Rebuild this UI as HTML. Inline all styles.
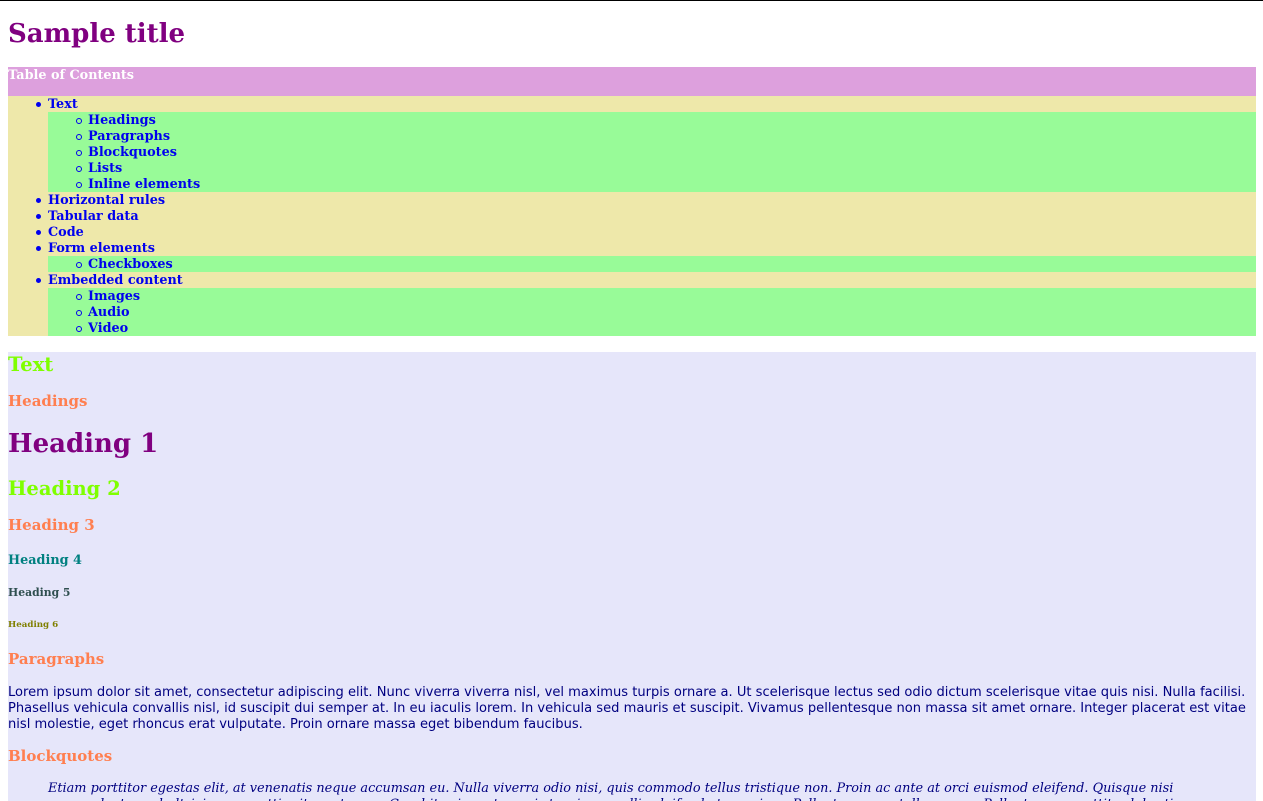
<!DOCTYPE html>
<html><head><meta charset="utf-8"><style>
html,body{margin:0;padding:0;background:#fff;width:1263px;height:800px;overflow:hidden}
body{border-top:1px solid #000;position:relative;font-family:"DejaVu Serif","Liberation Serif",serif}
.a{position:absolute;left:8px;white-space:nowrap;font-weight:bold}
#toch{position:absolute;left:8px;top:66px;width:1248px;height:29px;background:#dda0dd;color:#fff;font-weight:bold;font-size:12.8px;line-height:18px}
#toc{position:absolute;left:8px;top:95px;width:1248px;height:240px;background:#eee8aa}
.r{position:absolute;height:16px;line-height:18px;font-size:12.8px;font-weight:bold;color:#0000ee}
.g{background:#98fb98;left:40px;width:1208px}
.k{left:40px}
.d{position:absolute;width:5px;height:5px;border-radius:50%;top:6px}
.k .d{left:-12px;background:#0000ee}
.g .d{left:28px;border:1px solid #0000ee;width:4px;height:4px}
.g span{position:absolute;left:40px}
#sec{position:absolute;left:8px;top:351px;width:1248px;height:460px;background:#e6e6fa}
p{margin:0}
</style></head><body>
<div class="a" style="top:17px;font-size:26px;line-height:32px;color:#800080">Sample title</div>
<div id="toch">Table of Contents</div>
<div id="toc">
<div class="r k" style="top:0"><i class="d"></i>Text</div>
<div class="r g" style="top:16px"><i class="d"></i><span>Headings</span></div>
<div class="r g" style="top:32px"><i class="d"></i><span>Paragraphs</span></div>
<div class="r g" style="top:48px"><i class="d"></i><span>Blockquotes</span></div>
<div class="r g" style="top:64px"><i class="d"></i><span>Lists</span></div>
<div class="r g" style="top:80px"><i class="d"></i><span>Inline elements</span></div>
<div class="r k" style="top:96px"><i class="d"></i>Horizontal rules</div>
<div class="r k" style="top:112px"><i class="d"></i>Tabular data</div>
<div class="r k" style="top:128px"><i class="d"></i>Code</div>
<div class="r k" style="top:144px"><i class="d"></i>Form elements</div>
<div class="r g" style="top:160px"><i class="d"></i><span>Checkboxes</span></div>
<div class="r k" style="top:176px"><i class="d"></i>Embedded content</div>
<div class="r g" style="top:192px"><i class="d"></i><span>Images</span></div>
<div class="r g" style="top:208px"><i class="d"></i><span>Audio</span></div>
<div class="r g" style="top:224px"><i class="d"></i><span>Video</span></div>
</div>
<div id="sec"></div>
<div class="a" style="top:351px;font-size:19.5px;line-height:26px;color:#7fff00">Text</div>
<div class="a" style="top:390px;font-size:15px;line-height:20px;color:#ff7f50">Headings</div>
<div class="a" style="top:427px;font-size:26px;line-height:32px;color:#800080">Heading 1</div>
<div class="a" style="top:475px;font-size:19.5px;line-height:26px;color:#7fff00">Heading 2</div>
<div class="a" style="top:514px;font-size:15px;line-height:20px;color:#ff7f50">Heading 3</div>
<div class="a" style="top:552px;font-size:12.8px;line-height:16px;color:#008080">Heading 4</div>
<div class="a" style="top:585px;font-size:10.8px;line-height:14px;color:#2f4f4f">Heading 5</div>
<div class="a" style="top:618px;font-size:8.7px;line-height:12px;color:#808000">Heading 6</div>
<div class="a" style="top:648px;font-size:15px;line-height:20px;color:#ff7f50">Paragraphs</div>
<p style="position:absolute;left:8px;top:684px;width:1250px;font-family:'DejaVu Sans','Liberation Sans',sans-serif;font-size:13.07px;line-height:16px;color:#000080">Lorem ipsum dolor sit amet, consectetur adipiscing elit. Nunc viverra viverra nisl, vel maximus turpis ornare a. Ut scelerisque lectus sed odio dictum scelerisque vitae quis nisi. Nulla facilisi. Phasellus vehicula convallis nisl, id suscipit dui semper at. In eu iaculis lorem. In vehicula sed mauris et suscipit. Vivamus pellentesque non massa sit amet ornare. Integer placerat est vitae nisl molestie, eget rhoncus erat vulputate. Proin ornare massa eget bibendum faucibus.</p>
<div class="a" style="top:745px;font-size:15px;line-height:20px;color:#ff7f50">Blockquotes</div>
<p style="position:absolute;left:48px;top:780px;width:1168px;font-style:italic;font-size:12.85px;line-height:16px;color:#000080">Etiam porttitor egestas elit, at venenatis neque accumsan eu. Nulla viverra odio nisi, quis commodo tellus tristique non. Proin ac ante at orci euismod eleifend. Quisque nisi magna, luctus vel ultricies ac, mattis sit amet nunc. Curabitur in metus quis turpis convallis eleifend at nec risus. Pellentesque ac tellus quam. Pellentesque porttitor lobortis.</p>
</body></html>
